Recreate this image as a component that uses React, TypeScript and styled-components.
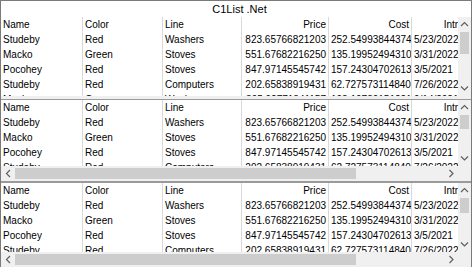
import * as React from 'react'
import styled, { createGlobalStyle } from 'styled-components'

const GlobalStyle = createGlobalStyle`
  html, body {
    margin: 0;
    padding: 0;
    background: #ffffff;
  }
  body {
    font-family: "Liberation Sans", Arial, sans-serif;
    font-size: 10px;
    color: #000000;
  }
`

interface Column {
  title: string
  width: number
  align: 'left' | 'right'
}

const columns: Column[] = [
  { title: 'Name', width: 82, align: 'left' },
  { title: 'Color', width: 80, align: 'left' },
  { title: 'Line', width: 79, align: 'left' },
  { title: 'Price', width: 87, align: 'right' },
  { title: 'Cost', width: 83, align: 'right' },
  { title: 'Introduced', width: 82, align: 'left' },
]

const rows: string[][] = [
  ['Studeby', 'Red', 'Washers', '823.65766821203', '252.54993844374', '5/23/2022'],
  ['Macko', 'Green', 'Stoves', '551.67682216250', '135.19952494310', '3/31/2022'],
  ['Pocohey', 'Red', 'Stoves', '847.97145545742', '157.24304702613', '3/5/2021'],
  ['Studeby', 'Red', 'Computers', '202.65838919431', '62.727573114840', '7/26/2022'],
  ['Macko', 'Green', 'Washers', '395.92771341157', '108.19730151221', '9/14/2021'],
]

const Window = styled.div`
  display: flex;
  flex-direction: column;
  width: 472px;
  height: 267px;
  box-sizing: border-box;
  border: 1px solid #7a7a7a;
  border-bottom: none;
  overflow: hidden;
  background: #ffffff;
`

const Title = styled.div`
  height: 16px;
  flex: none;
  display: flex;
  align-items: center;
  justify-content: center;
  padding-left: 7px;
  font-size: 11px;
  line-height: 16px;
`

const Pane = styled.div<{ $h: number }>`
  display: flex;
  flex-direction: column;
  flex: none;
  height: ${p => p.$h}px;
  overflow: hidden;
`

const PaneBody = styled.div`
  display: flex;
  flex: 1;
  min-height: 0;
`

const Viewport = styled.div`
  flex: 1;
  min-width: 0;
  overflow: hidden;
`

const GridRow = styled.div`
  display: flex;
  height: 15px;
  width: max-content;
`

const Cell = styled.div<{ $w: number; $align: 'left' | 'right' }>`
  flex: none;
  width: ${p => p.$w}px;
  box-sizing: border-box;
  padding: 0 2px;
  border-right: 1px solid #d9d9d9;
  line-height: 15px;
  white-space: nowrap;
  overflow: hidden;
  text-align: ${p => p.$align};
`

const VScroll = styled.div`
  display: flex;
  flex-direction: column;
  flex: none;
  width: 13px;
  background: #f0f0f0;
`

const ArrowBox = styled.div<{ $w?: number; $h?: number }>`
  display: flex;
  align-items: center;
  justify-content: center;
  flex: none;
  width: ${p => (p.$w ? `${p.$w}px` : 'auto')};
  height: ${p => (p.$h ? `${p.$h}px` : 'auto')};
`

const VTrack = styled.div`
  flex: 1;
  display: flex;
  flex-direction: column;
  align-items: center;
`

const VThumb = styled.div<{ $top: number; $size: number }>`
  margin-top: ${p => p.$top}px;
  width: 9px;
  height: ${p => p.$size}px;
  background: #cdcdcd;
`

const HScroll = styled.div`
  display: flex;
  flex: none;
  height: 15px;
  background: #f0f0f0;
`

const HTrack = styled.div`
  flex: 1;
  display: flex;
  align-items: center;
`

const HThumb = styled.div<{ $size: number }>`
  width: ${p => p.$size}px;
  height: 11px;
  background: #cdcdcd;
`

const Corner = styled.div`
  flex: none;
  width: 13px;
`

const Splitter = styled.div<{ $h: number; $line: number }>`
  flex: none;
  height: ${p => p.$h}px;
  box-sizing: border-box;
  background: #f0f0f0;
  border-bottom: ${p => p.$line}px solid #9a9a9a;
`

const Chevron: React.FC<{ dir: 'up' | 'down' | 'left' | 'right' }> = ({ dir }) => {
  const pts = {
    up: '1,5 4.5,1.5 8,5',
    down: '1,1.5 4.5,5 8,1.5',
    left: '5,1 1.5,4.5 5,8',
    right: '1.5,1 5,4.5 1.5,8',
  }[dir]
  const vertical = dir === 'up' || dir === 'down'
  return (
    <svg width={vertical ? 9 : 7} height={vertical ? 7 : 9} viewBox={vertical ? '0 0 9 7' : '0 0 7 9'}>
      <polyline points={pts} fill="none" stroke="#606060" strokeWidth="1.2" />
    </svg>
  )
}

interface GridPaneProps {
  height: number
  thumbTop: number
  thumbSize: number
  hThumb?: number
}

const GridPane: React.FC<GridPaneProps> = ({ height, thumbTop, thumbSize, hThumb }) => (
  <Pane $h={height}>
    <PaneBody>
      <Viewport>
        <GridRow>
          {columns.map(c => (
            <Cell key={c.title} $w={c.width} $align={c.align === 'right' || c.title === 'Introduced' ? 'right' : 'left'}>
              {c.title}
            </Cell>
          ))}
        </GridRow>
        {rows.map((r, i) => (
          <GridRow key={i}>
            {r.map((v, j) => (
              <Cell key={j} $w={columns[j].width} $align={columns[j].align}>
                {v}
              </Cell>
            ))}
          </GridRow>
        ))}
      </Viewport>
      <VScroll>
        <ArrowBox $h={15}>
          <Chevron dir="up" />
        </ArrowBox>
        <VTrack>
          <VThumb $top={thumbTop} $size={thumbSize} />
        </VTrack>
        <ArrowBox $h={15}>
          <Chevron dir="down" />
        </ArrowBox>
      </VScroll>
    </PaneBody>
    {hThumb !== undefined && (
      <HScroll>
        <ArrowBox $w={14}>
          <Chevron dir="left" />
        </ArrowBox>
        <HTrack>
          <HThumb $size={hThumb} />
        </HTrack>
        <ArrowBox $w={14}>
          <Chevron dir="right" />
        </ArrowBox>
        <Corner />
      </HScroll>
    )}
  </Pane>
)

const App: React.FC = () => (
  <>
    <GlobalStyle />
    <Window>
      <Title>C1List .Net</Title>
      <GridPane height={79} thumbTop={0} thumbSize={22} />
      <Splitter $h={4} $line={1} />
      <GridPane height={81} thumbTop={0} thumbSize={14} hThumb={341} />
      <Splitter $h={2} $line={2} />
      <GridPane height={84} thumbTop={0} thumbSize={15} hThumb={341} />
    </Window>
  </>
)

export default App
